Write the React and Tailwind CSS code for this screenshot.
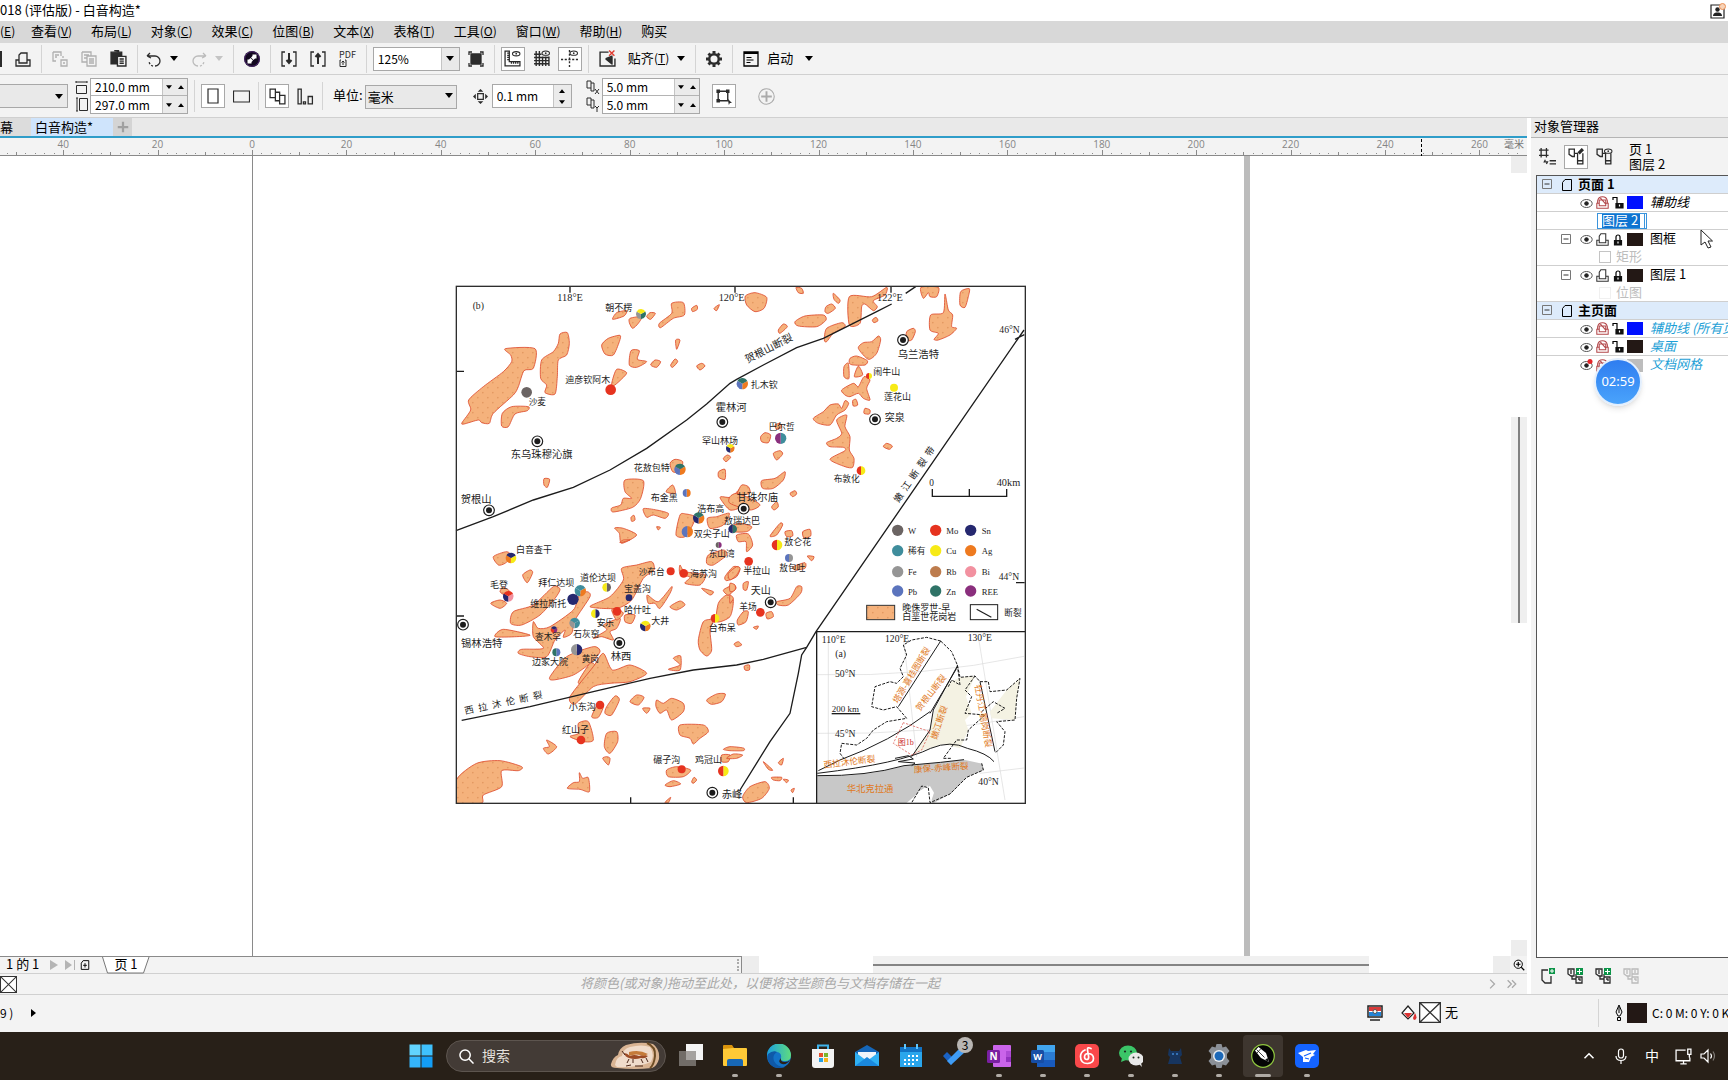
import React from "react";

/* ---------- geometry helpers ---------- */
const parse = (s) => s.trim().split(/\s+/).map((p) => p.split(",").map(Number));
const smooth = (s) => {
  const p = parse(s);
  const n = p.length;
  const k = 8;
  let d = `M${p[0][0]} ${p[0][1]}`;
  for (let i = 0; i < n; i++) {
    const a = p[(i - 1 + n) % n], b = p[i], c = p[(i + 1) % n], e = p[(i + 2) % n];
    d += `C${b[0] + (c[0] - a[0]) / k} ${b[1] + (c[1] - a[1]) / k} ${c[0] - (e[0] - b[0]) / k} ${c[1] - (e[1] - b[1]) / k} ${c[0]} ${c[1]}`;
  }
  return d + "Z";
};

const NW = [
  "166,206 255,206 250,265 222,272 205,320 190,345 130,400 118,430 95,428 85,420 42,432 36,428 62,390 56,360 100,320 160,275 185,245 182,225",
  "330,162 352,158 358,190 350,225 325,240 322,290 315,342 285,338 290,315 272,295 275,240 310,215 325,190",
  "157,400 185,380 235,380 232,392 195,402 175,440 155,438",
  "282,596 299,598 292,622 282,615",
  "488,118 500,98 530,92 522,108",
  "540,115 575,110 565,130 548,145 538,128",
  "590,110 600,98 616,100 602,118",
  "665,70 700,68 703,105 670,115 632,143 628,130 665,100",
  "725,85 740,76 742,88 728,95",
  "792,85 808,74 800,92",
  "455,195 475,175 510,166 508,185 490,225 465,222",
  "543,212 568,212 562,238 590,245 560,262 538,255",
  "602,255 615,240 632,245 620,262",
  "662,255 675,237 683,245 668,262",
  "740,258 755,250 765,258 750,270",
  "677,180 690,180 680,208",
  "500,268 530,278 512,300 490,318 485,310",
  "660,550 675,538 698,545 690,575 668,575",
  "806,575 825,568 825,598 806,592",
  "820,535 832,525 842,532 828,545",
  "525,600 580,602 572,655 548,682 490,696 485,684 512,675 520,655 545,655 525,635",
  "648,635 668,615 676,640",
  "580,686 620,690 655,700 645,715 610,705 590,712",
  "543,712 552,706 555,720 545,724",
  "494,744 520,745 560,765 515,790 508,760",
  "620,740 631,742 625,750",
  "690,705 708,702 735,710 728,735 705,770 678,765",
  "772,715 800,710 838,700 820,735 780,745",
  "812,650 845,652 868,630 870,680 840,690 815,662",
];
const NE = [
  "46,48 75,38 110,52 102,85 75,95 50,75",
  "198,22 215,25 220,40 205,38",
  "310,40 330,60 325,70 312,58",
  "288,80 305,72 316,85 295,100 285,95",
  "145,150 160,132 172,140 150,160",
  "195,125 225,108 280,105 288,120 260,140 205,138",
  "283,180 290,145 335,128 345,140 310,160 290,185",
  "358,50 425,50 470,22 465,45 430,62 442,80 430,92 405,72 395,80 390,130 358,135",
  "427,120 438,112 444,122 432,128",
  "573,22 625,22 620,50 600,50 595,38 580,55",
  "645,42 655,90 668,105 665,140 680,145 660,165 625,180 612,178 625,160 600,150 602,105 640,98",
  "692,35 718,26 715,50 705,82 690,75",
  "530,155 550,145 556,155 545,180 530,180",
  "385,205 400,188 425,185 445,168 452,180 440,220 415,238",
  "360,235 380,228 412,242 405,255 370,255 358,250",
  "342,260 355,250 357,295 342,290",
  "373,290 385,258 398,285",
  "335,330 370,310 385,320 402,290 420,300 410,325 420,360 400,355 385,340 360,350 345,345",
  "368,362 378,358 383,375 370,378",
  "405,385 420,390 418,402 402,400",
  "250,415 280,395 300,375 325,372 335,385 345,362 356,370 345,390 320,405 300,435 265,430",
  "320,420 350,405 345,440 360,470 358,510 372,535 368,562 345,560 300,538 345,512 340,502 300,500 290,488 320,475 335,460",
  "92,470 105,458 122,465 115,488 95,485",
  "135,435 150,430 155,442 140,448",
  "130,520 150,512 158,522 140,540",
  "95,602 135,595 165,575 160,600 130,625 98,625",
  "460,500 470,490 487,498 478,508",
  "22,640 35,615 55,620 60,640 30,645",
  "180,640 195,632 200,642 188,650",
  "125,680 140,665 145,680 132,690",
  "0,650 20,640 60,655 90,675 60,690 0,670",
  "120,768 150,730 158,735 140,765",
  "165,755 185,752 188,768 170,770",
  "218,755 240,748 242,768 222,774",
  "0,740 30,730 65,740 50,755 10,755",
  "20,765 55,762 68,795 50,815 48,785 25,785",
];
const SW = [
  "130,50 170,35 185,50 165,70 145,75",
  "218,105 240,90 248,98 232,128",
  "150,155 160,142 180,155 165,165",
  "122,190 150,180 170,190 150,205",
  "182,250 190,215 250,195 310,140 330,148 315,175 270,225 215,255",
  "515,85 560,75 605,65 612,90 580,115 545,180 500,205 420,200 480,170 520,120",
  "250,245 265,265 300,260 370,210 385,170 410,155 420,170 375,240 365,280 340,292 345,270 315,300 290,350 240,350 205,340 215,328 280,325 250,290",
  "135,290 160,268 240,285 200,290",
  "300,410 350,350 430,320 450,335 420,370 370,405 310,420",
  "385,425 420,370 435,380 400,430",
  "360,470 430,380 460,340 487,390 540,375 590,400 540,425 480,430 430,440 375,492",
  "430,295 470,270 460,255 510,235 500,265 480,275 490,300 455,290",
  "525,225 555,225 545,250 525,245",
  "485,210 500,205 520,220 500,240",
  "592,165 625,185 665,140 660,160 630,205 615,190 595,190",
  "660,200 690,183 705,195 680,210",
  "690,75 705,95 765,105 750,135 705,130 720,112 690,100",
  "755,145 790,155 780,165",
  "770,70 775,45 820,30 830,45 790,75",
  "825,110 850,80 870,85 860,110 830,122",
  "805,190 830,165 850,180 840,230 800,245",
  "745,300 760,245 790,240 780,270 785,330 770,348 750,330",
  "820,150 850,135 858,145 835,165",
  "655,388 690,375 670,355 692,348 690,390",
  "470,500 495,468 508,480 485,525 465,520",
  "425,530 445,490 460,500 445,532",
  "540,485 560,465 582,472 565,495",
  "578,505 600,505 590,520",
  "618,500 620,480 640,490 665,475 700,490 700,515 665,540 650,510 630,520",
  "770,480 800,462 826,462 815,485 785,493",
  "690,555 760,555 775,575 750,595 730,612 720,595 690,585",
  "385,550 415,545 430,600 400,605 360,590 385,580",
  "470,580 500,575 503,605 480,640 463,620",
  "280,625 298,620 290,600 320,620 295,642",
  "458,655 470,650 480,655 475,675",
  "20,718 80,670 150,662 215,680 205,692 155,692 155,740 100,765 95,789 20,789",
  "352,745 370,728 388,725 388,698 398,715 415,713 418,755 390,748",
  "650,690 680,680 722,690 700,710 655,710",
  "645,735 670,722 692,732 660,740",
  "725,725 732,712 740,720 730,730",
  "645,787 662,772 655,788",
  "510,8 520,0 540,0",
  "815,645 840,645 835,665 815,665",
];
const SE = [
  "-5,100 20,80 30,85 20,105 0,120",
  "40,130 55,125 50,150 40,148",
  "0,130 15,135 15,150 0,155",
  "0,165 10,175 0,190",
  "140,185 180,175 200,140 215,140 212,160 175,195 145,195",
  "22,240 40,215 55,215 48,245 25,255",
  "108,220 125,215 130,230 112,237",
  "70,262 85,258 80,268",
  "12,312 25,305 35,315 20,320",
  "43,378 58,375 58,390 45,390",
  "190,80 225,68 225,85 195,90",
  "232,48 252,50 245,62",
  "38,770 60,740 105,725 118,745 95,775 50,788",
  "-20,628 0,620 40,624 40,632 0,632",
  "-10,655 10,642 38,645 20,655",
  "100,665 128,690 115,688",
  "125,712 155,712 150,722 130,720",
  "145,668 160,655 155,675",
  "160,718 175,720 170,728",
  "183,750 193,745 188,758",
];

const C = {
  W: "#6b6463", Mo: "#e6331f", Sn: "#25286f", RM: "#3f8d9c", Cu: "#f7ea16", Ag: "#ee7a1f",
  Fe: "#959595", Rb: "#bd7c4d", Bi: "#f291a0", Pb: "#5b74bd", Zn: "#2f7367", REE: "#8a2f7d",
};

/* x, y, r, sector colours */
const DEPOSITS = [
  [573, 102, 15, ["Zn", "Fe", "Cu"]], [482, 329, 16, ["Mo"]], [230, 337, 16, ["W"]],
  [877, 311, 17, ["Ag", "Pb", "Zn"]], [841, 505, 13, ["Ag", "Sn", "Cu"]],
  [992, 475, 17, ["RM", "REE"]], [690, 568, 17, ["Ag", "Pb", "Zn"]], [710, 639, 12, ["Ag", "Pb"]],
  [746, 714, 17, ["Ag", "Sn", "Zn"]], [848, 747, 13, ["Zn", "Sn"]], [712, 755, 17, ["Ag", "Pb"]],
  [806, 795, 9, ["REE", "W"]], [1257, 288, 9, ["Cu", "Mo"]], [1332, 323, 12, ["Cu"]],
  [1233, 572, 13, ["Cu", "Mo"]], [981, 795, 16, ["Cu", "Mo"]], [183, 834, 16, ["Cu", "Ag", "Sn"]],
  [175, 949, 16, ["Bi", "Sn", "Mo"]], [391, 932, 17, ["Ag", "RM", "RM"]], [369, 958, 17, ["Sn"]],
  [470, 922, 13, ["W", "Cu"]], [537, 953, 10, ["Sn"]], [436, 1001, 13, ["Sn", "Cu"]],
  [501, 994, 13, ["Mo"]], [586, 1038, 16, ["Ag", "Sn", "Cu"]], [374, 1029, 16, ["RM", "Fe", "RM"]],
  [312, 1049, 10, ["REE", "Mo", "Sn"]], [319, 1117, 12, ["Pb", "Zn"]], [380, 1109, 17, ["Sn", "Fe"]],
  [662, 874, 12, ["Mo"]], [701, 880, 13, ["Mo"]], [795, 1015, 13, ["Cu", "Mo"]],
  [450, 1275, 13, ["Mo"]], [393, 1380, 13, ["Mo"]], [695, 1468, 12, ["Mo"]],
  [820, 1473, 16, ["Cu", "Mo"]], [896, 844, 13, ["Mo"]], [1017, 834, 12, ["Fe", "Pb"]],
  [931, 997, 13, ["Mo"]],
];
const TOWNS = [
  [262, 484], [117, 691], [817, 426], [1359, 180], [1275, 418], [881, 686],
  [39, 1034], [508, 1089], [787, 1538], [962, 967],
];
/* x, baseline y, size, text */
const LABELS = [
  [466, 94, 27, "朝不楞"], [346, 310, 27, "迪彦钦阿木"], [236, 376, 26, "沙麦"],
  [182, 535, 31, "东乌珠穆沁旗"], [32, 668, 31, "贺根山"], [797, 393, 31, "霍林河"],
  [756, 492, 27, "罕山林场"], [551, 573, 27, "花敖包特"], [602, 663, 27, "布金黑"],
  [742, 695, 27, "浩布高"], [822, 731, 27, "敖瑞达巴"], [731, 770, 27, "双尖子山"],
  [776, 832, 26, "东山湾"], [198, 819, 27, "白音查干"], [120, 923, 27, "毛登"],
  [265, 919, 27, "拜仁达坝"], [390, 904, 27, "道伦达坝"], [241, 981, 27, "维拉斯托"],
  [566, 885, 26, "沙布台"], [720, 890, 27, "海苏沟"], [522, 935, 27, "宝盖沟"],
  [522, 998, 27, "哈什吐"], [604, 1032, 27, "大井"], [440, 1038, 26, "安乐"],
  [370, 1071, 26, "石灰窑"], [255, 1081, 26, "查木罕"], [246, 1155, 27, "边家大院"],
  [395, 1145, 26, "黄岗"], [482, 1140, 31, "林西"], [33, 1102, 31, "锡林浩特"],
  [776, 1052, 27, "台布呆"], [356, 1291, 27, "小东沟"], [336, 1360, 27, "红山子"],
  [610, 1450, 27, "碾子沟"], [735, 1450, 27, "鸡冠山"], [815, 1555, 31, "赤峰"],
  [880, 883, 27, "半拉山"], [902, 941, 30, "天山"], [868, 991, 26, "羊场"],
  [988, 872, 26, "敖包吐"], [1003, 796, 27, "敖仑花"], [860, 663, 31, "甘珠尔庙"],
  [902, 325, 27, "扎木钦"], [956, 450, 26, "巴尔哲"], [1151, 606, 26, "布敦化"],
  [1304, 423, 30, "突泉"], [1302, 360, 27, "莲花山"], [1270, 286, 27, "闹牛山"],
  [1343, 234, 31, "乌兰浩特"],
];
const LEGEND = [
  [1343, 751, "W", "W", 1374], [1457, 751, "Mo", "Mo", 1489], [1562, 751, "Sn", "Sn", 1595],
  [1343, 812, "RM", "稀有", 1374], [1457, 812, "Cu", "Cu", 1489], [1562, 812, "Ag", "Ag", 1595],
  [1343, 875, "Fe", "Fe", 1374], [1457, 875, "Rb", "Rb", 1489], [1562, 875, "Bi", "Bi", 1595],
  [1343, 933, "Pb", "Pb", 1374], [1457, 933, "Zn", "Zn", 1489], [1562, 933, "REE", "REE", 1595],
];

function Pie({ x, y, r, parts }) {
  if (parts.length === 1) return <circle cx={x} cy={y} r={r} fill={C[parts[0]]} />;
  const n = parts.length;
  const start = n === 2 ? -Math.PI / 2 : -0.5;
  return (
    <g>
      {parts.map((p, i) => {
        const a = start + (i * 2 * Math.PI) / n;
        const b = start + ((i + 1) * 2 * Math.PI) / n;
        return (
          <path key={i} fill={C[p]}
            d={`M${x} ${y}L${x + r * Math.cos(a)} ${y + r * Math.sin(a)}A${r} ${r} 0 0 1 ${x + r * Math.cos(b)} ${y + r * Math.sin(b)}Z`} />
        );
      })}
    </g>
  );
}

const CJK = '"Liberation Serif","Noto Sans CJK SC",serif';
const Blobs = ({ list, dx, dy }) => (
  <g transform={`translate(${dx} ${dy})`}>
    {list.map((s, i) => <path key={i} d={smooth(s)} />)}
  </g>
);

function GeologyMap() {
  return (
    <svg viewBox="15 15 1716 1560" className="block h-[520px] w-[572px]" fontFamily={CJK} role="img" aria-label="白音构造">
      <defs>
        <pattern id="granite" width="30" height="30" patternUnits="userSpaceOnUse">
          <rect width="30" height="30" fill="#f5b27c" />
          <path d="M6 8h5M8.500 5.500v5M21 23h5M23.500 20.500v5" stroke="#d88a50" strokeWidth="1.500" />
        </pattern>
        <clipPath id="frame"><rect x="19" y="19" width="1707" height="1551" /></clipPath>
      </defs>
      <rect x="19" y="19" width="1707" height="1551" fill="#fff" />
      <g fill="url(#granite)" stroke="#dd4a2c" strokeWidth="2.500" clipPath="url(#frame)">
        <Blobs list={NW} dx={0} dy={0} />
        <Blobs list={NE} dx={840} dy={0} />
        <Blobs list={SW} dx={0} dy={780} />
        <Blobs list={SE} dx={840} dy={780} />
      </g>
      <g fill="none" stroke="#1c1c1c" strokeWidth="4">
        <path d="M18 752L130 710 250 660 370 622 480 570 590 505 710 420 770 372 840 310 860 298 940 255 1040 203 1120 175 1180 145 1280 95 1325 72M1367 40L1397 20" />
        <path d="M1722 150L1268 808 1098 1055 1070 1102 1055 1125 1045 1180 1020 1300 960 1385 870 1530M1695 178l28-14" />
        <path d="M35 1321L240 1280 430 1235 600 1195 730 1170 860 1155 940 1138 1070 1102" />
        <path d="M360 20v18M855 20v18M1323 20v18M20 274h22M20 1008h22M542 1552v18M1030 1552v18M1698 908h26" />
        <path d="M1447 627v22h223v-22M1558 627v22" />
      </g>
      {TOWNS.map(([x, y]) => (
        <g key={`${x}-${y}`}>
          <circle cx={x} cy={y} r="16" fill="#fff" stroke="#1c1c1c" strokeWidth="3.500" />
          <circle cx={x} cy={y} r="9" fill="#1c1c1c" />
        </g>
      ))}
      {DEPOSITS.map(([x, y, r, parts]) => <Pie key={`${x}-${y}`} x={x} y={y} r={r} parts={parts} />)}
      <g fill="#1c1c1c">
        {LABELS.map(([x, y, s, t]) => <text key={t} x={x} y={y} fontSize={s}>{t}</text>)}
        <text x="68" y="87" fontSize="29">(b)</text>
        <text x="322" y="62" fontSize="31">118°E</text>
        <text x="806" y="62" fontSize="31">120°E</text>
        <text x="1281" y="62" fontSize="31">122°E</text>
        <text x="1648" y="158" fontSize="29">46°N</text>
        <text x="1646" y="900" fontSize="29">44°N</text>
        <text x="1438" y="617" fontSize="28">0</text>
        <text x="1640" y="617" fontSize="31">40km</text>
        <text transform="translate(892 250) rotate(-27)" fontSize="31">贺根山断裂</text>
        <text transform="translate(1346 670) rotate(-56)" fontSize="28">{"嫩\u2002江\u2002断\u2002裂\u2002带"}</text>
        <text transform="translate(46 1303) rotate(-12)" fontSize="28">{"西\u2002拉\u2002沐\u2002伦\u2002断\u2002裂"}</text>
      </g>
      {LEGEND.map(([x, y, c, t, tx]) => (
        <g key={t}>
          <circle cx={x} cy={y} r="17" fill={C[c]} />
          <text x={tx} y={y + 11} fontSize="26" fill="#1c1c1c">{t}</text>
        </g>
      ))}
      <rect x="1250" y="976" width="84" height="43" fill="url(#granite)" stroke="#333" strokeWidth="3" />
      <rect x="1561" y="974" width="82" height="45" fill="#fff" stroke="#1c1c1c" strokeWidth="3" />
      <path d="M1580 988l44 24" stroke="#1c1c1c" strokeWidth="3.500" />
      <g fill="#1c1c1c">
        <text x="1357" y="993" fontSize="27">晚侏罗世-早</text>
        <text x="1357" y="1021" fontSize="27">白垩世花岗岩</text>
        <text x="1663" y="1008" fontSize="26">断裂</text>
      </g>
      <g transform="translate(840 780)">
        <rect x="260" y="275" width="626" height="515" fill="#fff" />
        <g stroke="#d9d9d9" strokeWidth="2" fill="none">
          <path d="M262 404q320 8 620-55M262 580q320 6 620-50M750 700l132-16M295 300v380M520 290l40 360M745 290l80 490" />
        </g>
        <path d="M690 412L735 408 708 470 725 520 705 540 715 570 690 625 640 612 550 640 600 570 612 515 655 430z" fill="#f4f2e3" />
        <path d="M780 515l50-65 40-35-10 60-5 65-70-5z" fill="#f4f2e3" />
        <path d="M262 707q150 5 260-30l110-10 70-8 55 12 5 20-50 20-50 50-55 30-15-55-65 55H262z" fill="#c8c8c8" />
        <path d="M600 738l12 20-10 30h-60l25-35z" fill="#fff" />
        <g fill="none" stroke="#1c1c1c" strokeWidth="3">
          <path strokeDasharray="9 4" d="M632 303L590 292 545 300 520 315 530 345 510 385 520 410 500 430 480 425 435 440 425 500 460 510 500 500 530 535 470 545 430 570 410 595 380 615 335 610 330 640 345 660" />
          <path strokeDasharray="9 4" d="M632 303L665 335 682 375 690 412 735 408 750 425 775 425 780 455 830 450 870 415 860 475 855 540 800 545 825 575 820 615 795 640" />
          <path strokeDasharray="9 4" d="M735 408L705 450 725 470 705 520 765 525 715 570 710 600 680 600 640 655 665 655M755 515l35-30 35 20-25 15M682 375l8 60-25-15-10 20" />
          <path d="M632 303L505 500M682 378L610 510 600 570 545 650M680 385L600 520M600 515q-120 90-270 145l-65 32M262 700q250-30 340-75 60-25 110 0 60 15 80 40M750 425l45 210" />
          <path d="M262 707q150 2 260-30l110-10 70-8M495 655l40-8 15 10-45 8 50 4-10 8" />
          <path strokeDasharray="9 4" d="M755 670l5 20-50 22-50 50-60 26-5-45-20-5-30 50" />
          <path d="M305 521h86" strokeWidth="4" />
        </g>
        <path d="M520 548l-30 62 55 35 30-15 25-55z" fill="none" stroke="#d8453c" strokeWidth="2" strokeDasharray="7 4" />
        <text x="503" y="616" fontSize="24" fill="#cc2f2f">图1b</text>
        <g fill="#1c1c1c" fontSize="29">
          <text x="275" y="308">110°E</text>
          <text x="465" y="306">120°E</text>
          <text x="713" y="304">130°E</text>
          <text x="316" y="351">(a)</text>
          <text x="315" y="411">50°N</text>
          <text x="315" y="590">45°N</text>
          <text x="745" y="735">40°N</text>
          <text x="305" y="516" fontSize="27">200 km</text>
        </g>
        <g fill="#e0791d" fontSize="26">
          <text transform="translate(503 492) rotate(-59)">塔源-喜桂图断裂</text>
          <text transform="translate(570 515) rotate(-52)">贺根山断裂</text>
          <text transform="translate(620 600) rotate(-72)">嫩江断裂</text>
          <text transform="translate(734 436) rotate(80)">牡丹江-鹤岗断裂</text>
          <text transform="translate(282 684) rotate(-7)">西拉沐伦断裂</text>
          <text transform="translate(552 698) rotate(-4)">康保-赤峰断裂</text>
          <text x="350" y="755" fontSize="28">华北克拉通</text>
        </g>
      </g>
      <path d="M1100 1572V1055H1726" fill="none" stroke="#1c1c1c" strokeWidth="4" />
      <rect x="19" y="19" width="1707" height="1551" fill="none" stroke="#2e2e2e" strokeWidth="4" />
    </svg>
  );
}

/* ---------- small parts ---------- */
const Ico = ({ s = "size-4", vb = "0 0 16 16", children, w = 1.3 }) => (
  <svg viewBox={vb} className={`${s} shrink-0`} fill="none" stroke="currentColor" strokeWidth={w} aria-hidden="true">{children}</svg>
);
const Tri = ({ c = "text-black", d = "M0 0h8L4 5z" }) => (
  <svg viewBox="0 0 8 5" className={`h-[5px] w-2 shrink-0 ${c}`} fill="currentColor" aria-hidden="true"><path d={d} /></svg>
);
const Sep = () => <span className="h-7 w-px shrink-0 bg-[#d4d4d4]" />;
const Btn = ({ label, on, className = "", children }) => (
  <button type="button" aria-label={label}
    className={`flex shrink-0 items-center justify-center ${on ? "h-6 w-6 border border-[#a8a8a8] bg-white" : ""} ${className}`}>
    {children}
  </button>
);

const PrintIcon = () => <Ico><path d="M4 9V4l2-2h6v7M1 9h3v3h8V9h3v6H1z" /></Ico>;
const EyeSmall = ({ x, y }) => <><ellipse cx={x} cy={y} rx="3.500" ry="2" strokeWidth="1" /><circle cx={x} cy={y} r=".8" fill="currentColor" stroke="none" /></>;

function MenuBar() {
  const items = [["查看", "V"], ["布局", "L"], ["对象", "C"], ["效果", "C"], ["位图", "B"], ["文本", "X"], ["表格", "T"], ["工具", "O"], ["窗口", "W"], ["帮助", "H"], ["购买", ""]];
  return (
    <nav className="flex h-[22px] shrink-0 items-center gap-[19px] bg-[#d8d8d8] pb-0.5 text-[13px] leading-5">
      <button type="button" className="w-3 shrink-0 whitespace-nowrap text-[12px]">(<u>E</u>)</button>
      {items.map(([t, k]) => (
        <button type="button" key={t + k} className="flex shrink-0 items-center whitespace-nowrap">
          {t}{k && <span className="text-[12px]">(<u>{k}</u>)</span>}
        </button>
      ))}
    </nav>
  );
}

function Toolbar() {
  return (
    <div className="flex h-8 shrink-0 items-center border-b border-[#d0d0d0] bg-[#f3f3f3] text-[#2b2b2b]">
      <Btn label="保存" className="mr-[13px] w-0.5"><span className="h-4 w-0.5 bg-[#2b2b2b]" /></Btn>
      <Btn label="打印"><PrintIcon /></Btn>
      <span className="ml-2.5 flex items-center gap-2.5"><Sep />
        <Btn label="剪切" className="text-[#b0b0b0]"><Ico><path d="M1 1h8v4M1 1v9h3M3 4h4M3 6h2M9 9h6v6H9zM11 12h2M11 5v2" /></Ico></Btn></span>
      <Btn label="复制" className="ml-[13px] text-[#b0b0b0]"><Ico><path d="M1 1h9v4M1 1v10h5M3 4h5M3 7h3M6 5h9v10H6zM8 8h5M8 10h5M8 12h5" /></Ico></Btn>
      <Btn label="粘贴" className="ml-[13px] mr-2.5"><Ico s="size-[17px]"><path d="M1 2h10v4H6v7H1zM4 .6h4V2" fill="currentColor" /><path d="M7 6h8v9H7zM9 8.500h4M9 10.500h4M9 12.500h4" fill="#f3f3f3" /></Ico></Btn>
      <Sep />
      <Btn label="撤消" className="ml-2"><Ico><path d="M1 5l3-3M1 5l4 2M1.500 5H9a5 5 0 0 1 0 10" /><path d="M7 15a5 5 0 0 1-4-5" strokeDasharray="2 1.500" /></Ico></Btn>
      <Btn label="撤消列表" className="ml-2 mr-[13px]"><Tri /></Btn>
      <Btn label="重做" className="text-[#bbb]"><Ico><path d="M15 5l-3-3M15 5l-4 2M14.500 5H7a5 5 0 0 0 0 10" /><path d="M9 15a5 5 0 0 0 4-5" strokeDasharray="2 1.500" /></Ico></Btn>
      <Btn label="重做列表" className="ml-2 mr-2.5"><Tri c="text-[#c4c4c4]" /></Btn>
      <Sep />
      <Btn label="搜索内容" className="mx-2.5">
        <svg viewBox="0 0 16 16" className="size-4"><circle cx="8" cy="8" r="8" fill="#12081f" /><circle cx="8" cy="8" r="7.300" fill="none" stroke="#5b2d82" strokeWidth=".8" /><path d="M8.500 3.500h4v4H11L9.500 9 7 6.500 8.500 5zM3.500 8.500h1.500L6.500 7 9 9.500 7.500 11v1.500h-4z" fill="#fff" /></svg>
      </Btn>
      <Sep />
      <Btn label="导入" className="ml-2.5"><Ico><path d="M4 1H1v14h3M12 1h3v14h-3" /><path d="M8 2v10M5.500 9L8 12l2.500-3" strokeWidth="2" /></Ico></Btn>
      <Btn label="导出" className="ml-[13px]"><Ico><path d="M4 1H1v14h3M12 1h3v14h-3" /><path d="M8 13V3M5.500 6L8 3l2.500 3" strokeWidth="2" /></Ico></Btn>
      <Btn label="发布为 PDF" className="ml-[13px] mr-2.5 flex-col items-start">
        <span className="text-[9px] leading-[9px]">PDF</span>
        <Ico s="size-2" vb="0 0 8 8" w={1}><path d="M1 1h1M6 1h1v6.500H1V1M4 6V2M2.500 3.500L4 2l1.500 1.500" /></Ico>
      </Btn>
      <Sep />
      <div className="ml-1.5 flex h-6 border border-[#a8a8a8] bg-white">
        <input aria-label="缩放级别" defaultValue="125%" className="w-[67px] bg-white pl-1 text-[12px] text-black outline-none" />
        <Btn label="缩放列表" className="w-[18px] border-l border-[#c4c4c4] bg-[#e9e9e9]"><Tri /></Btn>
      </div>
      <Btn label="全屏预览" className="ml-2 mr-2.5"><Ico><path d="M3 3h10v10H3z" fill="currentColor" /><path d="M1 4V1h3M12 1h3v3M15 12v3h-3M4 15H1v-3" /></Ico></Btn>
      <Sep />
      <Btn label="显示标尺" on className="ml-1.5"><Ico s="size-[17px]" w={1.200}><path d="M1 1h4v10h10v4H1zM3 3h2M3 5h2M3 7h2M3 9h2M7 11v2M9 11v2M11 11v2M13 11v2" /><EyeSmall x={11.500} y={3.500} /></Ico></Btn>
      <Btn label="显示网格" className="mx-2"><Ico s="size-[17px]"><path d="M1 4h7M1 7h14M1 10h14M1 13h14M3 1v14M6 1v14M9 6v9M12 6v9M15 6v9" /><EyeSmall x={12} y={3} /></Ico></Btn>
      <Btn label="显示辅助线" on className="mr-1.5"><Ico s="size-[17px]"><path d="M8 0v16M0 9h16" strokeDasharray="2 1.500" /><EyeSmall x={12} y={3} /></Ico></Btn>
      <Sep />
      <Btn label="贴齐关闭" className="ml-2.5"><Ico s="size-[17px]"><path d="M9 2H1v13h14V8M7 8l5-2v6z" /><path d="M12 7l-5 2 5 4z" fill="currentColor" /><path d="M9.500.5l5 5M14.500.5l-5 5" stroke="#e03c31" /></Ico></Btn>
      <Btn label="贴齐" className="ml-3 gap-2 text-[13px] text-black"><span className="whitespace-nowrap pb-0.5">贴齐<span className="text-[12px]">(<u>T</u>)</span></span><Tri /></Btn>
      <span className="ml-2.5" /><Sep />
      <Btn label="选项" className="mx-2.5"><Ico w={2.500}><circle cx="8" cy="8" r="4.800" /><path d="M8 0v2.500M8 13.500V16M0 8h2.500M13.500 8H16M2.500 2.500l1.700 1.700M11.800 11.800l1.700 1.700M2.500 13.500l1.700-1.700M11.800 4.200l1.700-1.700" strokeWidth="3" /></Ico></Btn>
      <Sep />
      <Btn label="启动" className="ml-2.5 gap-2 text-[13px] text-black">
        <Ico><path d="M1 1h14v14H1z" /><path d="M1 2h14" strokeWidth="2" /><path d="M3.500 6.500h5M3.500 9h7M3.500 11.500h4" strokeWidth="1" /></Ico><span className="pb-0.5">启动</span><span className="ml-1"><Tri /></span>
      </Btn>
    </div>
  );
}

function SpinPair({ a, b, la, lb }) {
  const row = (v, l, top) => (
    <div className={`flex h-[17px] ${top ? "border-b border-[#b4b4b4]" : ""}`}>
      <input aria-label={l} defaultValue={v} className="w-[71px] bg-white pl-1 text-[12px] leading-4 text-black outline-none" />
      <div className="flex w-[25px] items-center justify-around border-l border-[#c4c4c4] bg-[#ebebeb]">
        <button type="button" aria-label={`${l} 减`}><svg viewBox="0 0 8 5" className="h-1 w-1.5"><path d="M0 0h8L4 5z" /></svg></button>
        <button type="button" aria-label={`${l} 加`}><svg viewBox="0 0 8 5" className="h-1 w-1.5"><path d="M0 5h8L4 0z" /></svg></button>
      </div>
    </div>
  );
  return <div className="shrink-0 border border-[#a8a8a8]">{row(a, la, true)}{row(b, lb)}</div>;
}

function PropertyBar() {
  return (
    <div className="flex h-[43px] shrink-0 items-center border-b border-[#d0d0d0] bg-[#f3f3f3] text-[#2b2b2b]">
      <Btn label="页面尺寸" className="h-6 w-[68px] border border-l-0 border-[#a8a8a8] bg-[#e9e9e9]"><span className="ml-auto mr-1"><Tri /></span></Btn>
      <div className="ml-[7px] mr-0.5 flex flex-col gap-0.5">
        <Ico s="h-[15px] w-[13px]" vb="0 0 13 15" w={1}><path d="M1 1v2M12 1v2M1 2h11M1.500 5.500h10v8h-10z" /></Ico>
        <Ico s="h-[15px] w-[13px]" vb="0 0 13 15" w={1}><path d="M1 1h2M1 14h2M2 1v13M4.500 1.500h8v12h-8z" /></Ico>
      </div>
      <SpinPair a="210.0 mm" b="297.0 mm" la="页面宽度" lb="页面高度" />
      <span className="ml-1.5 mr-1.5"><span className="block h-8 w-px bg-[#d4d4d4]" /></span>
      <Btn label="纵向" on><Ico w={1.200}><path d="M3 1h10v14H3z" /></Ico></Btn>
      <Btn label="横向" className="mx-2"><Ico s="h-4 w-[17px]" w={1.200}><path d="M0 3h16v11H0z" /></Ico></Btn>
      <Sep />
      <Btn label="所有页面" on className="ml-1.5"><Ico s="size-[17px]" w={1.200}><path d="M1 1h5v8H1zM6 4h4v8H6V9M10 7h5v8h-5v-3" /></Ico></Btn>
      <Btn label="当前页" className="mx-2"><Ico s="size-[17px]" w={1.200}><path d="M1 1h3v14H1zM6 13h2v2H6zM10.500 8h4v7h-4z" /></Ico></Btn>
      <Sep />
      <label htmlFor="unit" className="ml-2.5 whitespace-nowrap pb-0.5 text-[13px] text-black">单位:</label>
      <div className="relative ml-0.5">
        <select id="unit" defaultValue="毫米" className="h-6 w-[92px] appearance-none border border-[#a8a8a8] bg-[#e9e9e9] pl-0.5 text-[13px] leading-5 text-black">
          <option>毫米</option><option>厘米</option><option>英寸</option>
        </select>
        <span className="pointer-events-none absolute right-1 top-2.5"><Tri /></span>
      </div>
      <span className="ml-1.5 mr-2.5"><Sep /></span>
      <Ico w={1.300} s="size-[15px]"><path d="M5 5h6v6H5z" /><path d="M8 0l3 3H5zM8 16l3-3H5zM0 8l3-3v6zM16 8l-3-3v6z" fill="currentColor" stroke="none" /></Ico>
      <div className="ml-1 flex h-6 border border-[#a8a8a8]">
        <input aria-label="微调距离" defaultValue="0.1 mm" className="w-[60px] bg-white pl-1 text-[12px] text-black outline-none" />
        <div className="flex w-[18px] flex-col items-center justify-around border-l border-[#c4c4c4] bg-[#ebebeb]">
          <button type="button" aria-label="增加"><svg viewBox="0 0 8 5" className="h-1 w-1.5"><path d="M0 5h8L4 0z" /></svg></button>
          <button type="button" aria-label="减少"><svg viewBox="0 0 8 5" className="h-1 w-1.5"><path d="M0 0h8L4 5z" /></svg></button>
        </div>
      </div>
      <span className="ml-1.5 mr-2"><Sep /></span>
      <div className="mr-0.5 flex flex-col gap-0.5">
        {["M9 9l4 5M13 9l-4 5", "M9 9l2 2 2-2M11 11v4"].map((d) => (
          <Ico key={d} s="h-[15px] w-[14px]" vb="0 0 14 15" w={1}><path d="M1 1h4v7H1zM5 3h3v8H5V8" /><path d={d} /></Ico>
        ))}
      </div>
      <SpinPair a="5.0 mm" b="5.0 mm" la="再制距离 X" lb="再制距离 Y" />
      <span className="mx-1.5"><Sep /></span>
      <Btn label="将所有对象视为已填充" on><Ico s="size-[17px]"><path d="M3 3h9v9H3z" /><path d="M2 2h2v2H2zM11 2h2v2h-2zM2 11h2v2H2z" fill="currentColor" /><path d="M12 10l4 4-2 0-1 2z" fill="currentColor" stroke="none" /></Ico></Btn>
      <span className="ml-1.5 mr-4"><Sep /></span>
      <Btn label="快速自定义" className="text-[#ababab]"><Ico s="size-[17px]"><circle cx="8" cy="8" r="7.300" strokeWidth="1" /><path d="M8 3v10M3 8h10" strokeWidth="1.800" /></Ico></Btn>
    </div>
  );
}

const PX_PER_MM = 4.721;
const RULER_ZERO = 252;
function Ruler() {
  const ticks = [];
  for (let mm = -52; mm <= 268; mm += 2) ticks.push(mm);
  const face = '"Open Sans",sans-serif';
  return (
    <svg className="block h-[18px] w-full shrink-0 overflow-visible border-b border-[#8a8a8a] bg-[#f3f3f3]" aria-hidden="true">
      {ticks.map((mm) => {
        const x = Math.round(RULER_ZERO + mm * PX_PER_MM) + 0.5;
        const h = mm % 20 === 0 ? 5 : mm % 10 === 0 ? 3 : 1;
        return <path key={mm} d={`M${x} ${mm % 10 === 0 ? 17 : 16}v${-h}`} stroke="#8a8a8a" />;
      })}
      {ticks.filter((mm) => mm % 20 === 0).map((mm) => (
        <text key={mm} x={RULER_ZERO + mm * PX_PER_MM} y="10" fontSize="10" textAnchor="middle" fill="#858585" fontFamily={face}>{Math.abs(mm)}</text>
      ))}
      <path d="M1421.500 1v17" stroke="#000" strokeDasharray="3 2" />
      <text x="1504" y="10" fontSize="10" fill="#777" fontFamily='"Open Sans","Noto Sans CJK SC",sans-serif'>毫米</text>
    </svg>
  );
}

const NoColor = ({ s }) => (
  <svg viewBox="0 0 20 20" className={`${s} shrink-0 bg-white`} stroke="#333" fill="none" strokeWidth="1.200" preserveAspectRatio="none" aria-hidden="true"><path d="M.6.6h18.800v18.800H.6zM1 1l18 18M19 1L1 19" /></svg>
);

function Canvas() {
  return (
    <main className="relative min-h-0 flex-1 overflow-hidden bg-white">
      <div className="absolute inset-y-0 left-[252px] w-[998px] border-l border-r-[6px] border-l-[#8a8a8a] border-r-[#bcbcbc]">
        <div className="absolute left-[202px] top-[129px]"><GeologyMap /></div>
      </div>
      <div className="absolute inset-y-0 right-0 flex w-4 flex-col">
        <span className="h-[17px] bg-[#ededed]" />
        <span className="mt-[244px] flex h-[206px] justify-center bg-[#efefef]"><span className="w-0.5 bg-[#808080]" /></span>
        <span className="mt-auto h-4 bg-[#ededed]" />
      </div>
    </main>
  );
}

function PageBar() {
  return (
    <div className="flex h-[17px] shrink-0 bg-white text-[12px] leading-4">
      <div className="flex w-[742px] shrink-0 items-center border-r border-t border-[#8a8a8a] bg-[#f3f3f3] pl-1.5">
        <span className="w-10 whitespace-nowrap pb-0.5 text-[13px]">1 的 1</span>
        <button type="button" aria-label="下一页" className="ml-1 text-[#b4b4b4]"><svg viewBox="0 0 8 10" className="h-2.5 w-2" fill="currentColor"><path d="M0 0l8 5-8 5z" /></svg></button>
        <button type="button" aria-label="末页" className="ml-[7px] text-[#b4b4b4]"><svg viewBox="0 0 10 10" className="size-2.5" fill="currentColor"><path d="M0 0l7 5-7 5zM9 0h1v10H9z" /></svg></button>
        <button type="button" aria-label="添加页" className="ml-[5px]"><Ico s="size-2.5" w={1.500}><path d="M5 1h9v14H2V5zM8 5v7M5 8.500h6" /></Ico></button>
        <button type="button" className="relative ml-3 h-[17px] w-12 pb-0.5">
          <svg viewBox="0 0 48 17" className="absolute inset-0 h-[17px] w-12" aria-hidden="true"><path d="M.5 0l5 16h36L47 0" fill="#fff" stroke="#777" /></svg>
          <span className="relative block text-[13px] leading-[14px]">页 1</span>
        </button>
        <span className="ml-auto mr-0.5 h-3 border-r-2 border-dotted border-[#aaa]" />
      </div>
      <div className="flex flex-1 items-stretch">
        <span className="w-[17px] bg-[#ededed]" />
        <span className="min-w-4 flex-[114]" />
        <span className="flex flex-[496] items-center bg-[#f0f0f0]"><span className="h-0.5 w-full bg-[#848484]" /></span>
        <span className="min-w-4 flex-[124]" />
        <span className="w-[17px] bg-[#ededed]" />
        <button type="button" aria-label="导航器" className="flex w-[17px] items-center justify-center bg-[#f3f3f3]"><Ico s="size-3"><circle cx="7" cy="7" r="5.500" /><path d="M11 11l4 4M7 4v6M4 7h6" strokeWidth="1.600" /></Ico></button>
      </div>
    </div>
  );
}

/* ---------- object manager ---------- */
const Minus = () => <Ico s="size-[11px]" vb="0 0 11 11" w={1}><path d="M.5.5h9v9h-9z" stroke="#777" /><path d="M2.500 5h5" stroke="#333" /></Ico>;
const PageIcon = () => <Ico s="size-3" vb="0 0 12 12" w={1}><path d="M4 .5h6.500v11h-9V3.500z" /></Ico>;
const Eye = ({ off }) => <Ico s="h-3 w-[13px]" vb="0 0 13 12" w={1}><ellipse cx="6.500" cy="6.500" rx="5.700" ry="4" stroke="#555" /><circle cx="6.500" cy="6.500" r="1.800" fill="#222" stroke="#222" />{off && <circle cx="10" cy="2.500" r="2.500" fill="#e5252a" stroke="none" />}</Ico>;
const LayerPrint = ({ off }) => (
  <Ico s="size-[13px]" w={1.300}>
    {off
      ? <g stroke="#b3474a"><path d="M2 9V6q1-5 6-5t6 5v3M4 9V5h8v4M1 9h3v3h8V9h3v6H1zM5 2l7 8" /></g>
      : <g stroke="#333"><path d="M4 9V4l2-3h6v8M1 9h3v3h8V9h3v6H1z" /></g>}
  </Ico>
);
const Lock = ({ open }) => <Ico s="h-[13px] w-3" vb="0 0 12 13" w={1.200}>{open ? <path d="M1 4V1.500h4V8" /> : <path d="M4 8V4a2 2 0 0 1 4 0v4" />}<path d={open ? "M4 7.500h7v4.500H4z" : "M2.500 7.500h7v4.500h-7z"} fill="#111" stroke="#111" /><path d={open ? "M7.500 8.500v2" : "M6 8.500v2"} stroke="#fff" /></Ico>;

function Layer({ name, color, tone = "text-black", italic, open, off, hidden, expand, line = true }) {
  return (
    <li className={`flex h-[18px] items-center pl-6 ${line ? "border-b border-[#cfcfcf]" : ""}`}>
      <span className="flex w-[19px] shrink-0">{expand && <Minus />}</span>
      <button type="button" aria-label="显示" className="shrink-0"><Eye off={hidden} /></button>
      <button type="button" aria-label="打印" className="ml-[3px] shrink-0"><LayerPrint off={off} /></button>
      <button type="button" aria-label="锁定" className="ml-[3px] shrink-0"><Lock open={open} /></button>
      <span className={`ml-[3px] h-[13px] w-4 shrink-0 ${color}`} />
      <span className={`ml-[7px] whitespace-nowrap pb-0.5 text-[13px] leading-4 ${tone} ${italic ? "italic" : ""}`}>{name}</span>
    </li>
  );
}
const PageRow = ({ name }) => (
  <li className="flex h-[18px] items-center border-b border-[#cfcfcf] bg-[#ddebfb] pl-[5px] text-[13px] font-bold leading-4">
    <span className="flex w-[19px]"><Minus /></span><PageIcon /><span className="ml-[5px] pb-0.5">{name}</span>
  </li>
);
const ObjectRow = ({ name, faint }) => (
  <li className="flex h-[18px] items-center border-b border-[#cfcfcf] pl-[62px] text-[13px] leading-4 text-[#bdbdbd]">
    <span className={`mr-[5px] size-3 border ${faint ? "border-[#f0f0f0]" : "border-[#c4c4c4]"}`} /><span className="pb-0.5">{name}</span>
  </li>
);

function Timer() {
  return (
    <div className="absolute left-[57px] top-[182px] flex size-12 items-center justify-center rounded-full border-2 border-[#e3effd] bg-linear-to-b from-[#2f7df0] to-[#4aa3fb] font-['Noto_Sans'] text-[13px] text-white shadow-md">02:59</div>
  );
}

function ObjectManager() {
  const stack = "M1 1h5v7H4L1 6zM6 5h3v7h5v3H9V12M14 5v7";
  return (
    <aside className="flex w-[201px] shrink-0 flex-col border-l-4 border-white bg-[#f3f3f3]">
      <h2 className="h-5 shrink-0 border-b border-[#b4b4b4] bg-[#e9e9e9] pl-[3px] text-[13px] leading-4">对象管理器</h2>
      <div className="flex h-[37px] shrink-0 items-center pl-2 text-[#2b2b2b]">
        <Btn label="对象属性"><Ico s="size-[17px]" w={1.200}><path d="M2 0v9M7 0v9M0 2h9M0 7h9M6 11l-1 2h3l-1 2M10 12h6M10 15h6" /></Ico></Btn>
        <Btn label="跨图层编辑" on className="ml-2"><Ico s="size-[17px]" w={1.200}><path d={stack} /><path d="M10 5l4-4" strokeWidth="3" /></Ico></Btn>
        <Btn label="图层管理器视图" className="ml-2"><Ico s="size-[17px]" w={1.200}><path d={stack} /><EyeSmall x={11.500} y={3} /></Ico></Btn>
        <div className="ml-4 flex flex-col whitespace-nowrap pb-0.5 text-[13px] leading-[15px] text-black"><span>页 1</span><span>图层 2</span></div>
      </div>
      <div className="relative ml-[5px] min-h-0 flex-1 overflow-hidden border-b border-l border-t border-[#555] bg-white">
        <ul>
          <PageRow name="页面 1" />
          <Layer name="辅助线" color="bg-[#0010ff]" italic open off />
          <li className="flex h-[18px] items-center border-b border-[#cfcfcf] pl-[60px]">
            <span className="flex h-4 items-center border border-[#3a94dc] pl-1 pr-px">
              <input aria-label="图层名称" defaultValue="图层 2" className="h-[14px] w-[38px] bg-[#0f74d1] pb-0.5 text-[13px] leading-[12px] text-white outline-none" />
              <span className="ml-1 h-[14px] w-px bg-[#3a94dc]" />
            </span>
          </li>
          <Layer name="图框" color="bg-[#231815]" expand line={false} />
          <ObjectRow name="矩形" />
          <Layer name="图层 1" color="bg-[#231815]" expand line={false} />
          <ObjectRow name="位图" faint />
          <PageRow name="主页面" />
          <Layer name="辅助线 (所有页)" color="bg-[#0010ff]" tone="text-[#1d9fd6]" italic open off />
          <Layer name="桌面" color="bg-[#231815]" tone="text-[#1d9fd6]" italic open off />
          <Layer name="文档网格" color="bg-[#bdbdbd]" tone="text-[#1d9fd6]" italic open off hidden line={false} />
        </ul>
        <Timer />
        <svg viewBox="0 0 13 20" className="absolute left-[163px] top-[53px] h-5 w-[13px]" fill="#fff" stroke="#222" aria-hidden="true"><path d="M1 1v15l4-3 3 6 3-1-3-6h4.500z" /></svg>
      </div>
      <div className="flex h-9 shrink-0 items-center gap-3 pl-2 text-[#2b2b2b]">
        <Btn label="新建图层"><Ico><path d="M9 2H3v10l3 3h6V8" /><path d="M10 0h6v6h-6z" fill="#0c9448" stroke="none" /><path d="M13 1v4M11 3h4" stroke="#fff" strokeWidth="1" /></Ico></Btn>
        {["新建主图层（所有页）", "新建主图层（奇数页）"].map((l) => (
          <Btn key={l} label={l}><Ico><path d="M1 1h6v7H4L1 6zM5 8v3h4V6M9 9h6v6H9zM4 2v4M11 11h2v2" /><path d="M9 0h7v7H9z" fill="#0c9448" stroke="none" /><path d="M12.500 1v5M10 3.500h5" stroke="#fff" strokeWidth="1" /></Ico></Btn>
        ))}
        <Btn label="新建主图层（偶数页）" className="text-[#bbb]"><Ico><path d="M1 1h6v7H4L1 6zM5 8v3h4V6M9 9h6v6H9zM4 2v4M11 11h2v2M9 1h6v5H9zM12 2v3" /></Ico></Btn>
      </div>
    </aside>
  );
}

function StatusBar() {
  return (
    <footer className="flex h-[38px] shrink-0 items-center border-t border-[#d0d0d0] bg-[#f3f3f3] pb-0.5 text-[12px]">
      <span>9 )</span>
      <button type="button" aria-label="展开" className="ml-[18px]"><svg viewBox="0 0 5 8" className="h-2 w-[5px]"><path d="M0 0l5 4-5 4z" /></svg></button>
      <div className="ml-auto flex items-center">
        <svg viewBox="0 0 16 16" className="size-4" aria-hidden="true"><path d="M1 1h14v11H1z" fill="#fff" stroke="#222" strokeWidth="1.500" /><path d="M2 2h12v4H2z" fill="#d93a3a" /><path d="M2 7h12v4H2z" fill="#2484d6" /><circle cx="8" cy="6.500" r="2" fill="#fff" stroke="#555" /><path d="M3 15h10" stroke="#222" strokeWidth="1.500" /></svg>
        <svg viewBox="0 0 16 16" className="ml-[18px] size-4" aria-hidden="true"><path d="M7 1l6 7-6 6-6-6z" fill="#fff" stroke="#222" strokeWidth="1.200" /><path d="M3 8h8l-4 5z" fill="#d33" /><path d="M14 8q3 5 0 7-2 0-2-2z" fill="#d33" /></svg>
        <span className="ml-0.5"><NoColor s="h-[21px] w-[22px]" /></span>
        <span className="ml-1 w-[153px] pb-0.5 text-[13px]">无</span>
        <Sep />
        <Ico s="ml-4 h-4 w-2" vb="0 0 8 16" w={1}><path d="M4 0l3 7-2 4H3L1 7zM4 2v6M2.500 12.500h3v3h-3z" /></Ico>
        <span className="ml-1 size-5 bg-[#231815]" />
        <span className="ml-[5px] w-[76px] overflow-hidden whitespace-nowrap">C: 0 M: 0 Y: 0 K: 100</span>
      </div>
    </footer>
  );
}

/* ---------- task bar ---------- */
const App24 = ({ label, run, active, children }) => (
  <button type="button" aria-label={label} className="relative flex h-[42px] w-11 shrink-0 items-center justify-center">
    {active && <span className="absolute inset-x-0.5 inset-y-0 rounded bg-white/10" />}
    <svg viewBox="0 0 24 24" className="relative size-6" aria-hidden="true">{children}</svg>
    {run && <span className={`absolute bottom-0 left-1/2 h-[3px] -translate-x-1/2 rounded-full bg-[#b0aba5] ${active ? "w-4" : "w-1.5"}`} />}
  </button>
);

function Taskbar() {
  return (
    <div className="grid h-12 shrink-0 grid-cols-[1fr_auto_1fr] items-center overflow-hidden bg-[#282018] text-white">
      <span />
      <div className="flex items-center">
        <App24 label="开始"><path d="M.5.5h11v11H.5z" fill="#62d4ff" /><path d="M12.500.5h11v11h-11z" fill="#3fc1fd" /><path d="M.5 12.500h11v11H.5z" fill="#35b5fb" /><path d="M12.500 12.500h11v11h-11z" fill="#139df5" /></App24>
        <label className="mx-[3px] flex h-8 w-[220px] items-center overflow-hidden rounded-full border border-[#5d554f] bg-[#433b36] pl-3">
          <Ico s="size-[15px]" w={1.600}><circle cx="6.500" cy="6.500" r="5.500" /><path d="M10.500 10.500l5 5" /></Ico>
          <input aria-label="搜索" placeholder="搜索" className="ml-2 w-20 flex-1 bg-transparent pb-0.5 text-[14px] outline-none placeholder:text-[#e4e0dc]" />
          <svg viewBox="0 0 52 28" className="mr-1 h-7 w-[52px]" aria-hidden="true">
            <path d="M2 22Q4 15 9 13 10 6 17 3q14-4 27-1 7 5 6 15-2 7-7 9-18 2-35 0-7 0-6-4z" fill="#d9b493" />
            <path d="M6 23q1-8 7-9 1-7 8-9 12-3 20 0 5 8 1 15-14 6-34 5z" fill="#f0dccb" />
            <path d="M15 11q3 0 6 3 4-2 9 0 5-2 9 0-3 3-7 2-6 2-12 0-4-1-5-5z" fill="#9c4b26" />
            <path d="M20 10q10-3 19 2l-4 2q-8-3-15 0z" fill="#c57b3a" />
            <path d="M13 9l3 4M20 17l-2 4M24 17v4M32 17l2 4M37 16l2 4M17 24l5-1M26 24h8" stroke="#4a2618" strokeWidth="1" />
            <path d="M38 1q9 4 8 13t-5 12" fill="none" stroke="#6e4d25" strokeWidth="2" />
          </svg>
        </label>
        <App24 label="任务视图"><path d="M7 0h17v16H7z" fill="#f4f4f4" /><path d="M0 7h17v15H0z" fill="#8b8783" opacity=".75" /></App24>
        <App24 label="文件资源管理器" run><path d="M0 2q0-1 1-1h8l2 3v5H0z" fill="#d9930c" /><path d="M0 5l10-1h13q1 0 1 1v16q0 1-1 1H1q-1 0-1-1z" fill="#fdc937" /><path d="M4 22v-5q0-2 2-2h12q2 0 2 2v5z" fill="#1767b5" /></App24>
        <App24 label="Edge" run>
          <defs><linearGradient id="eg" x1="0" y1="0" x2="1" y2="0"><stop stopColor="#1a9fe0" /><stop offset="1" stopColor="#5fdc7e" /></linearGradient></defs>
          <circle cx="12" cy="12" r="12" fill="#1373c8" /><path d="M0 12A12 12 0 0 1 24 11q0 6-6 6-5 0-4-3 1-5-4-6-7-1-10 5z" fill="url(#eg)" /><path d="M10 8q-5 3-3 9 3 6 11 6Q8 26 3 20-1 14 1 10q5-4 9-2z" fill="#0f59a8" /><path d="M14 14q-1 4 4 4 3 0 5-2-3 5-8 4-5-2-1-6z" fill="#2a211b" />
        </App24>
        <App24 label="Microsoft Store"><path d="M1 5h22v16q0 3-3 3H4q-3 0-3-3z" fill="#f3f3f3" /><path d="M7 5V1.500h10V5" fill="none" stroke="#3eb2ea" strokeWidth="2" /><path d="M8 9h4v4H8z" fill="#e8502c" /><path d="M13 9h4v4h-4z" fill="#7bb52c" /><path d="M8 14h4v4H8z" fill="#27a1e4" /><path d="M13 14h4v4h-4z" fill="#f9b51b" /></App24>
        <App24 label="邮件"><path d="M0 8l12-7 12 7v3H0z" fill="#1566b8" /><path d="M3 8h18v10H3z" fill="#f0f5fa" /><path d="M0 8l12 9 12-9v14H0z" fill="#2fb0f3" /><path d="M0 22l12-9 12 9z" fill="#1a88dd" /></App24>
        <App24 label="日历"><path d="M1 3h22v6H1z" fill="#1273c4" /><path d="M1 8h22v15H1z" fill="#2aa6ec" /><path d="M6 0v5M18 0v5" stroke="#5cc6ff" strokeWidth="2" /><path d="M9 12h11M5 16h15M5 20h11" stroke="#fff" strokeWidth="2" strokeDasharray="2 2" /></App24>
        <div className="relative">
          <App24 label="待办"><path d="M0 12l4-4 7 7-3 6z" fill="#1a62c4" /><path d="M8 21l-4-4L18 3l5 4z" fill="#3f9cf5" /></App24>
          <span className="absolute right-1 top-0.5 flex size-4 items-center justify-center rounded-full bg-[#b9b6b3] text-[12px] leading-none text-black">3</span>
        </div>
        <App24 label="OneNote" run><rect x="6" y="1" width="18" height="22" rx="1" fill="#ca64ea" /><path d="M19 7h5v6h-5z" fill="#ae4bd5" /><path d="M19 13h5v5h-5z" fill="#9332bf" /><rect x="0" y="6" width="13" height="13" rx="1.500" fill="#7a1fa2" /><text x="6.500" y="16" textAnchor="middle" fontSize="10" fontWeight="700" fill="#fff" fontFamily="Open Sans,sans-serif">N</text></App24>
        <App24 label="Word" run><path d="M6 1h18v7H6z" fill="#41a5ee" /><path d="M6 8h18v8H6z" fill="#2b7cd3" /><path d="M6 16h18v7H6z" fill="#185abd" /><rect x="0" y="6" width="13" height="13" rx="1.500" fill="#174ea6" /><text x="6.500" y="16" textAnchor="middle" fontSize="9" fontWeight="700" fill="#fff" fontFamily="Open Sans,sans-serif">W</text></App24>
        <App24 label="网易云音乐" run><rect width="24" height="24" rx="5" fill="#f9484a" /><path d="M16 4.500q-4-2-3.500 1.500l1.200 7q0 2.500-2 2.500T9.500 13q0-3.500 4-3.500 5 .5 5 5t-6 5q-7 0-7-7 0-4.500 4.500-6.500" fill="none" stroke="#fff" strokeWidth="1.700" strokeLinecap="round" /></App24>
        <App24 label="微信" run><ellipse cx="9" cy="9" rx="9" ry="7.500" fill="#3bc568" /><path d="M3 14l-1 4 5-2z" fill="#3bc568" /><ellipse cx="17" cy="15" rx="7.500" ry="6.500" fill="#e9e9e9" /><path d="M20 20l3 3-1-4z" fill="#e9e9e9" /><g fill="#1d2b22"><circle cx="6" cy="7.500" r="1.100" /><circle cx="12" cy="7.500" r="1.100" /><circle cx="14.500" cy="13.500" r="1" /><circle cx="19.500" cy="13.500" r="1" /></g></App24>
        <App24 label="猫" run><path d="M6 4l2 3h8l2-3 1 7-2 2 2 7H5l2-7-2-2z" fill="#17355f" /><circle cx="10" cy="10" r="1" fill="#3f86d0" /><circle cx="14" cy="10" r="1" fill="#3f86d0" /></App24>
        <App24 label="设置" run><path d="M9.500 0h5l1 3.500 3.500-1 3.500 4.500L20 10v4l2.500 3-3.500 4.500-3.500-1-1 3.500h-5l-1-3.500-3.500 1L1.500 17 4 14v-4L1.500 7 5 2.500l3.500 1z" fill="#8b9097" /><circle cx="12" cy="12" r="6" fill="#e9edf1" /><circle cx="12" cy="12" r="4.500" fill="#1c68b8" /></App24>
        <App24 label="CorelDRAW" run active><circle cx="12" cy="12" r="11.300" fill="#050505" stroke="#8fc63f" strokeWidth="1.200" /><path d="M4 6.500L7.500 3 15 9l3 9-8-4z" fill="#fff" /><path d="M18 18l-1.500-4-2.500 2z" fill="#111" /><path d="M5.500 5.500l8 8M6 9l3.500-4" stroke="#111" strokeWidth=".8" /></App24>
        <App24 label="词典" run><rect width="24" height="24" rx="5" fill="#1463ff" /><path d="M3 9l8-3 2 1 8-1-3 4 2 1-4 2-2 5H8v-5z" fill="#fff" /><path d="M9 12l7-3M10 14l4 1" stroke="#1463ff" strokeWidth="1.200" /></App24>
      </div>
      <div className="flex items-center justify-end pr-3">
        <Ico s="size-3" w={2}><path d="M2 11l6-6 6 6" /></Ico>
        <span className="ml-[18px]" />
        <Ico s="size-4" w={1.200}><rect x="5.500" y="1" width="5" height="9" rx="2.500" /><path d="M3 8q0 4.500 5 4.500T13 8M8 13v3" /></Ico>
        <span className="ml-4 pb-0.5 text-[14px] leading-none">中</span>
        <span className="ml-4" />
        <Ico s="size-[17px]" w={1.200}><path d="M10 2H1v10h13V9M5 15h6M8 12v3M12 1h3v5h-3zM13.500 6v3" /></Ico>
        <span className="ml-2" />
        <Ico s="size-4" w={1.200}><path d="M1 6h3l4-4v12l-4-4H1zM10.500 5.500q2 2.500 0 5" /><path d="M13 3.500q3 4.500 0 9" opacity=".4" /></Ico>
      </div>
    </div>
  );
}

export default function App() {
  return (
    <div className="flex h-screen min-h-[600px] flex-col overflow-hidden bg-[#f3f3f3] font-['Noto_Sans_CJK_SC',sans-serif] text-black">
      <header className="flex h-[21px] shrink-0 items-center justify-between bg-white pr-0.5 text-[13px] leading-5">
        <h1 className="whitespace-nowrap pb-0.5">018 (评估版) - 白音构造*</h1>
        <button type="button" aria-label="帐户"><svg viewBox="0 0 16 16" className="size-4" fill="none" aria-hidden="true"><path d="M1 2h13v13H1z" stroke="#222" strokeWidth="1.200" /><circle cx="7.500" cy="6.500" r="2.200" fill="#222" /><path d="M3 13q0-3 3-3.500h3q3 .5 3 3.500z" fill="#222" /><circle cx="12.500" cy="3.500" r="3" fill="#f7d3b8" stroke="#ea8f55" /></svg></button>
      </header>
      <MenuBar />
      <Toolbar />
      <PropertyBar />
      <div className="flex min-h-0 flex-1">
        <div className="flex min-w-0 flex-1 flex-col">
          <div className="flex h-5 shrink-0 items-start border-b-2 border-[#2f9dc9] bg-[#e9e9e9] text-[13px] leading-[15px]">
            <button type="button" className="h-[18px] w-[31px] bg-[#dcdcdc] pb-0.5 text-left">幕</button>
            <button type="button" className="h-[18px] w-[82px] bg-[#cfe4fc] pb-0.5 pl-1 text-left">白音构造*</button>
            <button type="button" aria-label="新建文档" className="flex h-[18px] w-[19px] items-center justify-center bg-[#d4d4d4] text-[#a0a0a0]"><Ico s="size-3" w={3}><path d="M8 1v14M1 8h14" /></Ico></button>
          </div>
          <Ruler />
          <Canvas />
          <PageBar />
          <div className="flex h-[21px] shrink-0 items-center border-t border-[#d0d0d0] bg-[#f3f3f3] text-[#a8a8a8]">
            <button type="button" aria-label="无颜色"><NoColor s="h-[17px] w-[17px]" /></button>
            <p className="flex-1 truncate pb-0.5 pl-4 text-center text-[13px] italic leading-[18px]">将颜色(或对象)拖动至此处，以便将这些颜色与文档存储在一起</p>
            <div className="mr-2.5 flex gap-2.5">
              <Ico s="size-2.5" w={2}><path d="M5 1l7 7-7 7" /></Ico>
              <Ico s="size-2.5" w={2}><path d="M1 2l6 6-6 6M8 2l6 6-6 6" /></Ico>
            </div>
          </div>
        </div>
        <ObjectManager />
      </div>
      <StatusBar />
      <Taskbar />
    </div>
  );
}
